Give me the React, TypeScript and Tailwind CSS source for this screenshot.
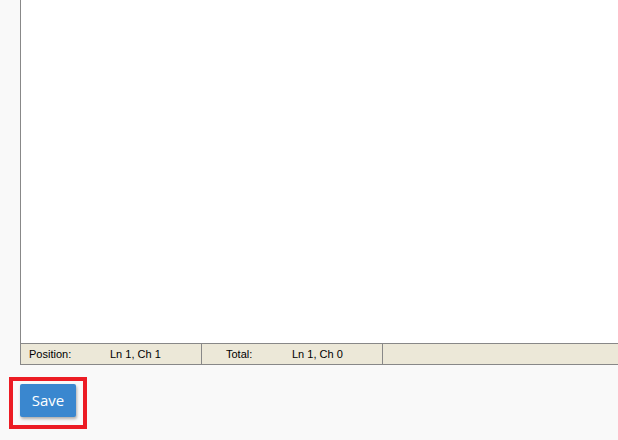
export default function App() {
  return (
    <div className="h-[440px] w-[618px] overflow-hidden bg-[#f9f9f9]">
      <div className="ml-[20px] w-[700px]">
        <div className="h-[343px] border-l border-[#888] bg-white" />
        <div className="flex h-[22px] border border-[#888] bg-[#ece8d8] text-[11px] text-black" style={{ fontFamily: '"Liberation Sans", Arial, sans-serif' }}>
          <div className="flex w-[181px] items-center border-r border-[#888]">
            <span className="w-[89px] pl-[8px]">Position:</span>
            <span>Ln 1, Ch 1</span>
          </div>
          <div className="flex w-[181px] items-center border-r border-[#888]">
            <span className="w-[90px] pl-[24px]">Total:</span>
            <span>Ln 1, Ch 0</span>
          </div>
          <div className="flex-1" />
        </div>
      </div>
      <div className="ml-[9px] mt-[12px] inline-block border-[4px] border-[#ec1c24] pb-[8px] pl-[7px] pr-[7px] pt-[3px]">
        <button
          className="h-[33px] w-[56px] rounded-[2px] bg-[#3a87cf] text-[15px] text-white shadow-[1px_2px_3px_rgba(0,0,0,0.3)]"
          style={{ fontFamily: '"Open Sans", sans-serif' }}
        >
          Save
        </button>
      </div>
    </div>
  );
}
